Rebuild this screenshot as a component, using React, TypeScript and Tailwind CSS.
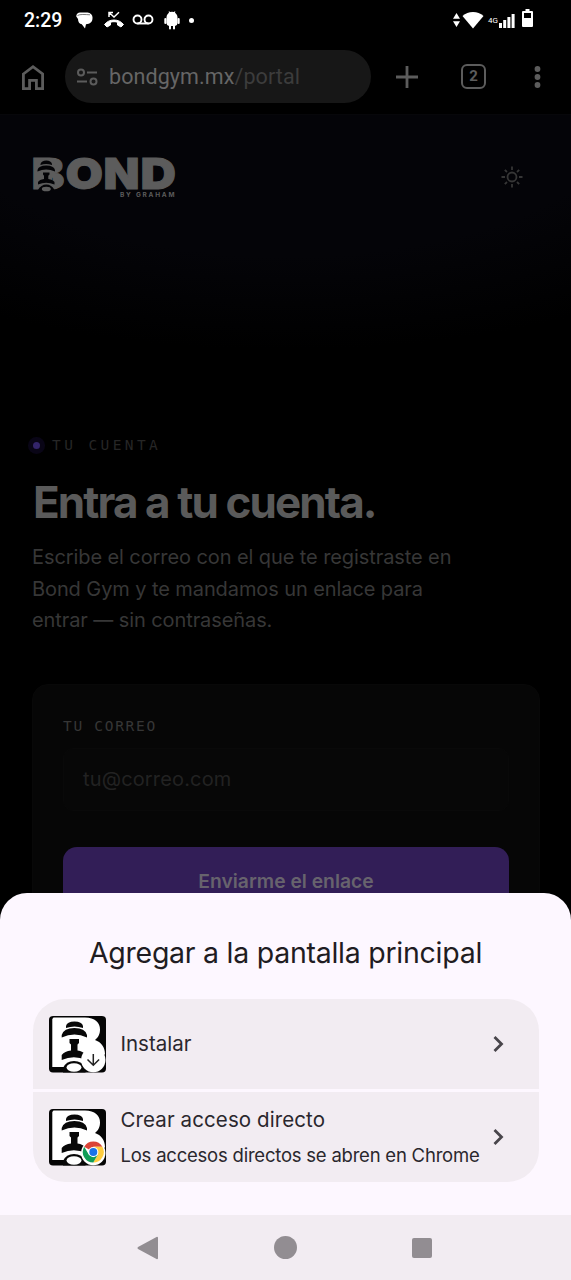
import type { ReactNode } from 'react';

function StatusBar() {
    return (
        <div className="flex h-10 items-center justify-between pl-6 pr-[38px] text-white">
            <div className="flex items-center">
                <span className="mt-px w-[52px] font-[Roboto,sans-serif] text-[19.5px] font-medium leading-10">2:29</span>
                <svg width="17" height="17" viewBox="0 0 17 17" fill="currentColor">
                    <path d="M4 .5h7.500a5 5 0 0 1 5 5.500c0 4-2.500 6-6.500 6.200l-1 4.300-3.200-4.300C3.500 12 2 10 2 7L.3 4.500C0 2.500 2 .5 4 .5z" />
                    <path d="M1.500 3.500C4 2 9 2.500 14 2.800" stroke="#555" strokeWidth=".8" fill="none" />
                </svg>
                <svg className="ml-2.5" width="22" height="18" viewBox="0 0 22 18" fill="currentColor">
                    <path d="M1.500 13.500C6 7.500 16 7.500 20.500 13.500l-2.500 2.500-3.500-2v-2.800c-2.300-.7-4.700-.7-7 0V14L4 16z" stroke="currentColor" strokeLinejoin="round" />
                    <path d="M6 6V1.500h4M6.300 1.800 11 6l5-4.700" fill="none" stroke="currentColor" strokeWidth="1.500" />
                </svg>
                <svg className="ml-[7px]" width="22" height="12" viewBox="0 0 22 12" fill="none" stroke="currentColor" strokeWidth="1.900">
                    <circle cx="5.500" cy="5.500" r="4" />
                    <circle cx="16.500" cy="5.500" r="4" />
                    <path d="M5.500 9.500h11" />
                </svg>
                <svg className="ml-2.5" width="16" height="19" viewBox="0 0 16 19" fill="currentColor">
                    <path d="M2.500 6.500C2.500 4 4 2.500 5 1.800L4.600.5h1l.6.6a6 6 0 0 1 3.600 0l.6-.6h1L11 1.800c1 .7 2.500 2.200 2.500 4.700V12q0 2.500-2.500 3v2.500a1 1 0 0 1-2 0V15H7v2.500a1 1 0 0 1-2 0V15q-2.500-.5-2.500-3z" />
                    <rect x=".3" y="7" width="2.200" height="6" rx="1.100" />
                    <rect x="13.500" y="7" width="2.200" height="6" rx="1.100" />
                </svg>
                <span className="ml-[9px] size-[5px] rounded-full bg-white" />
            </div>
            <div className="flex items-center">
                <svg width="7" height="14" viewBox="0 0 7 14" fill="currentColor">
                    <path d="M3.500 0 7 5.800H0zM3.500 14 7 8.200H0z" />
                </svg>
                <svg className="ml-[2px]" width="22" height="18" viewBox="0 0 22 18" fill="currentColor">
                    <path d="M.5 5a15.500 15.500 0 0 1 21 0L11 17.500z" />
                </svg>
                <span className="ml-1 mt-0.5 w-[11px] font-[Roboto,sans-serif] text-[8px] leading-none">4G</span>
                <svg width="16" height="15" viewBox="0 0 16 15" fill="currentColor">
                    <path d="M0 10h3v5H0zM4.200 7h3v8h-3zM8.400 4h3v11h-3zM12.600 1h3v14h-3z" />
                </svg>
                <svg className="-mt-1 ml-[7px]" width="11" height="18" viewBox="0 0 11 18">
                    <path fill="currentColor" d="M3.500 0h4v2H10a1 1 0 0 1 1 1v14a1 1 0 0 1-1 1H1a1 1 0 0 1-1-1V3a1 1 0 0 1 1-1h2.500z" />
                    <path d="M2 4h7v5H2z" />
                </svg>
            </div>
        </div>
    );
}

function BrowserBar() {
    return (
        <div className="flex h-[75px] items-center border-b border-[#07070a] pb-px pl-[21px] text-[#5c5c5c]">
            <svg width="24" height="26" viewBox="0 0 24 26" fill="none" stroke="currentColor" strokeWidth="2.800">
                <path d="M2.400 10 12 2.700l9.600 7.300v14.600h-6.200v-8.200H8.600v8.200H2.400z" />
            </svg>
            <div className="ml-5 flex h-[53px] w-[306px] items-center rounded-full bg-[#171717] pl-3">
                <svg width="21" height="18" viewBox="0 0 21 18" fill="none" stroke="currentColor" strokeWidth="2">
                    <circle cx="4" cy="4.500" r="3" />
                    <path d="M10 4.500h10M0 13.500h10" />
                    <circle cx="16.500" cy="13.500" r="3" />
                </svg>
                <span className="ml-[11px] mt-px font-[Roboto,sans-serif] text-[21.5px] tracking-[0.08px] text-[#666]">
                    bondgym.mx<span className="text-[#3c3c3c]">/portal</span>
                </span>
            </div>
            <svg className="ml-[25px]" width="22" height="22" viewBox="0 0 22 22" stroke="currentColor" strokeWidth="2.800">
                <path d="M11 0v22M0 11h22" />
            </svg>
            <div className="ml-[43px] flex size-[25px] items-center justify-center rounded-[6px] border-[2.5px] border-current font-[Roboto,sans-serif] text-[15px] font-bold leading-none">
                2
            </div>
            <svg className="ml-[48px]" width="7" height="22" viewBox="0 0 7 22" fill="currentColor">
                <circle cx="3.500" cy="3" r="2.900" />
                <circle cx="3.500" cy="11" r="2.900" />
                <circle cx="3.500" cy="19" r="2.900" />
            </svg>
        </div>
    );
}

function BondLogo() {
    return (
        <svg width="146" height="44" viewBox="0 0 146 44" className="overflow-visible fill-[#5c5c5c] font-[Inter,sans-serif]">
            <g fontSize="42" fontWeight="900" stroke="#5c5c5c" strokeWidth="1">
                <text x="-.5" y="33.500" textLength="33" lengthAdjust="spacingAndGlyphs">B</text>
                <text x="33.500" y="33.500" textLength="37.500" lengthAdjust="spacingAndGlyphs">O</text>
                <text x="71.500" y="33.500" textLength="36" lengthAdjust="spacingAndGlyphs">N</text>
                <text x="108.500" y="33.500" textLength="35.500" lengthAdjust="spacingAndGlyphs">D</text>
            </g>
            <path fill="#5c5c5c" d="M5 4h15v28H5z" />
            <g fill="#040407">
                <path d="M8.500 9q1-3.500 5.800-3.500T20 9v1q-6-2-11.500 0z" />
                <path d="M5.500 15q1-4.500 8.700-4.500T23 15v1.500q-9-4-17.500 0z" />
                <path d="M11 17.500h6.500v2l-1.200 1.200V24q4.500.5 6.200 3v2.500q-8.500-3.500-16.500 0V27q1.500-2.500 6-3v-3.300L11 19.500z" />
                <path d="M6 35q3-5.500 8.300-5.500T22.500 35z" />
            </g>
            <ellipse cx="14.300" cy="34" rx="4.500" ry="2.300" />
            <text x="88" y="41.700" fontSize="6.500" fontWeight="700" textLength="54.500" lengthAdjust="spacing">BY GRAHAM</text>
        </svg>
    );
}

function PortalPage() {
    return (
        <div className="bg-[radial-gradient(ellipse_560px_235px_at_50%_0,#040408_60%,#000_100%)] font-[Inter,sans-serif]">
            <header className="flex items-center justify-between pl-8 pr-[35px] pt-[40px]">
                <BondLogo />
                <svg width="48" height="44" viewBox="-24 -22 48 44" fill="none" stroke="#363636" strokeWidth="1.800">
                    <circle r="4.500" />
                    <path d="M0-10.500v3.500M0 7v3.500M-10.500 0h3.500M7 0h3.500M-7.200-7.200l2.200 2.200M5 5l2.200 2.200M-7.200 7.200l2.200-2.200M5-5l2.200-2.200" />
                </svg>
            </header>
            <main className="px-8 pt-[236px]">
                <div className="flex items-center">
                    <span className="ml-[1px] size-[7px] rounded-full bg-[#33246a] shadow-[0_0_0_5px_#090516]" />
                    <span className="ml-3 font-['DejaVu_Sans_Mono',monospace] text-[14.5px] leading-5 tracking-[3.4px] text-[#262626]">TU CUENTA</span>
                </div>
                <h1 className="ml-px mt-5 whitespace-nowrap text-[44px] font-bold leading-[54px] tracking-[-1.9px] text-[#5a5a5a]">Entra a tu cuenta.</h1>
                <p className="mt-[13px] whitespace-nowrap text-[20px] leading-[31.5px] tracking-[-0.09px] text-[#373737]">
                    Escribe el correo con el que te registraste en
                    <br />
                    Bond Gym y te mandamos un enlace para
                    <br />
                    entrar — sin contraseñas.
                </p>
                <div className="mt-[47px] h-[240px] w-[508px] rounded-[16px] border border-[#080808] bg-[#060606] px-[30px] pt-[31px]">
                    <div className="font-['DejaVu_Sans_Mono',monospace] text-[14.5px] leading-5 tracking-[1.7px] text-[#363636]">TU CORREO</div>
                    <div className="mt-3 flex h-[63px] items-center rounded-[10px] border border-[#090909] bg-[#070707] pl-[19px] text-[20px] tracking-[0.15px] text-[#222]">
                        tu@correo.com
                    </div>
                    <div className="mt-[36px] flex h-[70px] w-[446px] items-center justify-center rounded-[14px] bg-[#321e57] text-[19.3px] font-semibold text-[#67636d]">
                        Enviarme el enlace
                    </div>
                </div>
            </main>
        </div>
    );
}

function AppIcon({ children }: { children: ReactNode }) {
    return (
        <svg width="57" height="57" viewBox="0 0 57 57" className="shrink-0">
            <rect width="57" height="56.500" rx="4" fill="#050505" />
            <path fill="#fff" d="M4.500 1.500H36c10 0 15 5 15 12 0 5-2 8-5 10.500 6 2 10 7 10 14L46 51H3.300V3z" />
            <g fill="#080808">
                <path d="M17 10q1-4.500 8.500-4.500T34 10v2q-8.500-3-17 0z" />
                <path d="M12.700 19q2-7 12.700-7t12.600 7v2.500q-12.500-6-25.300 0z" />
                <path d="M20.500 23h9.500v4l-1.500 1.500v6q5.500.5 8.500 4.500v5q-12-5.500-24.300 0v-5q3-4 9.300-4.500v-6L20.500 27z" />
                <path d="M14 52q3-7 11-7t11.500 7v4.500H14z" />
            </g>
            <ellipse cx="25" cy="51.500" rx="7.500" ry="4.200" fill="#fff" />
            <circle cx="44.300" cy="44" r="12.200" fill="#fff" />
            {children}
        </svg>
    );
}

function InstallBadge() {
    return <path d="M44.300 38v11.500M38.500 43.500l5.800 5.800 5.800-5.800" fill="none" stroke="#222" strokeWidth="1.500" />;
}

function ChromeBadge() {
    return (
        <g transform="translate(44.300 43)">
            <path fill="#db4437" d="M0 0-9.100-5.250A10.500 10.500 0 0 1 9.100-5.250H0z" />
            <path fill="#ffcd40" d="M0-5.250h9.100A10.500 10.500 0 0 1 0 10.500L4.550 2.600z" />
            <path fill="#0f9d58" d="M0 10.500A10.500 10.500 0 0 1-9.100-5.250L-4.550 2.600 0 5.250 4.550 2.600z" />
            <circle r="5.100" fill="#fff" />
            <circle r="4" fill="#1a73e8" />
        </g>
    );
}

function Chevron() {
    return (
        <svg width="12" height="18" viewBox="0 0 12 18" fill="none" stroke="#48454b" strokeWidth="2.800" className="ml-auto">
            <path d="m1.500 2 7 7-7 7" />
        </svg>
    );
}

function SystemNav() {
    return (
        <div className="mt-auto flex h-[65px] items-center bg-[#f2ecf2] pl-[137px] text-[#928d92]">
            <svg width="22" height="24" viewBox="0 0 22 24" fill="currentColor" stroke="currentColor" strokeWidth="2" strokeLinejoin="round">
                <path d="M1.500 12 20 1.800v20.400z" />
            </svg>
            <span className="ml-[115px] size-[23px] rounded-full bg-current" />
            <span className="ml-[115px] size-[20px] rounded-[2px] bg-current" />
        </div>
    );
}

function InstallSheet() {
    return (
        <div className="absolute inset-x-0 bottom-0 flex h-[387px] flex-col rounded-t-[27px] bg-[#fdf7ff] font-[Inter,sans-serif] text-[#1f1c22]">
            <h2 className="mt-[38px] whitespace-nowrap text-center text-[28.5px] leading-[43px] tracking-[-0.26px]">Agregar a la pantalla principal</h2>
            <div className="mx-auto mt-[25px] flex w-[506px] flex-col gap-[3px] overflow-hidden rounded-[32px] text-[20.5px] text-[#2a272d]">
                <div className="flex h-[90px] items-center bg-[#f2ecf2] pl-4 pr-[34px]">
                    <AppIcon>
                        <InstallBadge />
                    </AppIcon>
                    <span className="ml-[15px]">Instalar</span>
                    <Chevron />
                </div>
                <div className="flex h-[90px] items-center bg-[#f2ecf2] pl-4 pr-[34px]">
                    <AppIcon>
                        <ChromeBadge />
                    </AppIcon>
                    <div className="ml-[15px] mt-px whitespace-nowrap">
                        <div className="leading-9 tracking-[0.1px]">Crear acceso directo</div>
                        <div className="text-[18.5px] leading-[35px] tracking-[-0.22px]">Los accesos directos se abren en Chrome</div>
                    </div>
                    <Chevron />
                </div>
            </div>
            <SystemNav />
        </div>
    );
}

export default function App() {
    return (
        <div className="relative h-[1280px] w-[571px] overflow-hidden bg-black">
            <StatusBar />
            <BrowserBar />
            <PortalPage />
            <InstallSheet />
        </div>
    );
}
